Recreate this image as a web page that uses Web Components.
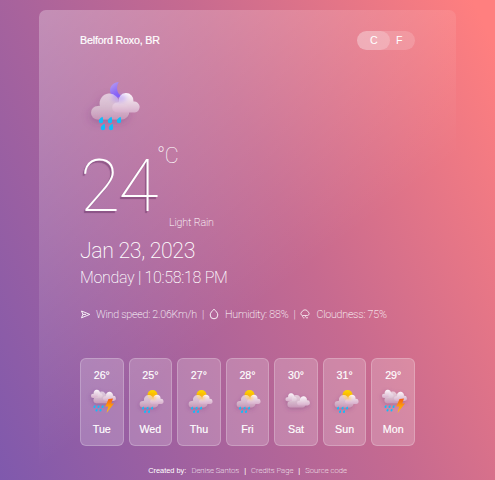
<!DOCTYPE html>
<html lang="en">
<head>
<meta charset="utf-8">
<title>Weather</title>
<style>
html,body{margin:0;height:100%;overflow:hidden}
body{font-family:"Liberation Sans",Arial,sans-serif;color:#fff}
</style>
</head>
<body>
<weather-app></weather-app>
<script>
const define = (name, html) => customElements.define(name, class extends HTMLElement {
  connectedCallback() {
    if (this.shadowRoot) return;
    const t = document.createElement('template');
    t.innerHTML = typeof html === 'function' ? html(this) : html;
    this.attachShadow({mode: 'open'}).append(t.content.cloneNode(true));
  }
});

/* Clouds are drawn on a 38x25 grid, then placed and scaled. */
const BACK = 'M6.700 25A6.700 6.700 0 0 1 6.700 11.600L9 11.300A9.700 9.700 0 1 1 28 9.800A7.800 7.800 0 1 1 30.500 25Z';
const FRONT = 'M4.900 19A5 5 0 0 1 4.900 9L6.500 8.800A7.500 7.500 0 1 1 21.200 8A5.500 5.500 0 0 1 22.500 19Z';
const cloud = (d, x, y, s, fill) =>
  `<path d="${d}" transform="translate(${x} ${y}) scale(${s})" fill="url(#${fill})"/>`;
const drops = (pts, s = 1) => pts.map(([x, y]) =>
  `<path transform="translate(${x} ${y}) scale(${s})" d="M1.500-3.100C-1-1.800-2.100-.3-2.100 1.100A2.050 2.050 0 0 0 2 1.100C2.100-.3 1.900-1.800 1.500-3.100Z" fill="#12bdf8"/>`).join('');
const pair = () =>
  `<g filter="url(#sh)">${cloud(BACK, 5, 16.500, 1, 'b')}</g>${cloud(FRONT, 26.300, 15.500, 1, 'f')}`;
const art = {
  night: () => `<path d="M32.800 4C30 8.500 30.500 16 36 18.500C31 21.500 24 18 24 12.500C24 7.500 28 4.500 32.800 4Z" fill="url(#m)"/>${pair()}
    <ellipse cx="33" cy="20" rx="7.500" ry="4" fill="#9275ff" opacity=".38" filter="url(#bl)"/>${drops([[15,42],[24,42],[33,42],[17,49],[25,49]], 1.05)}`,
  day: () => `<g transform="translate(4 0)"><circle cx="31" cy="14" r="10" fill="url(#s)"/>
    <g transform="translate(.5 -1) scale(.98 .96)">${pair()}</g>
    <ellipse cx="33" cy="20" rx="6" ry="4.500" fill="#ffc86c" opacity=".55" filter="url(#bl)"/>
    ${drops([[12,40],[21,40],[30,40],[16,47],[24,47]])}</g>`,
  clouds: () => `<g filter="url(#sh)">${cloud(FRONT, 9, 11, .82, 'f')}${cloud(BACK, 13, 15, .96, 'b')}${cloud(FRONT, 32, 17, .94, 'f')}</g>`,
  storm: () => `<g filter="url(#sh)">${cloud(FRONT, 8, 4, .85, 'f')}${cloud(BACK, 13, 8, .9, 'b')}${cloud(FRONT, 32, 8, .94, 'f')}</g>
    <path d="M43 22L52 21L48.500 31L54 31L39 50L42.500 37L36.500 37Z" fill="url(#t)"/>
    ${drops([[15,37],[23,37],[31,37],[19,44],[27,44]])}`
};
define('weather-icon', el => `<style>:host{display:block}svg{display:block;width:100%;height:100%;overflow:visible}</style>
<svg viewBox="0 0 60 60"><defs>
<linearGradient id="b" x1="0" y1="0" x2="0" y2="1"><stop stop-color="#f6edf4" stop-opacity=".66"/><stop offset=".55" stop-color="#dbc2d3" stop-opacity=".85"/><stop offset="1" stop-color="#c897b9" stop-opacity=".95"/></linearGradient>
<linearGradient id="f" x1="0" y1="0" x2="0" y2="1"><stop stop-color="#fffaff" stop-opacity=".97"/><stop offset=".5" stop-color="#ead6e4" stop-opacity=".95"/><stop offset="1" stop-color="#d7aecb"/></linearGradient>
<linearGradient id="m" x1="0" y1="0" x2=".6" y2="1"><stop stop-color="#bba2ef"/><stop offset="1" stop-color="#7a55fb"/></linearGradient>
<linearGradient id="s" x1="0" y1="0" x2="0" y2="1"><stop stop-color="#ffd800"/><stop offset="1" stop-color="#f9a000"/></linearGradient>
<linearGradient id="t" x1="0" y1="0" x2="0" y2="1"><stop stop-color="#f45d12"/><stop offset=".5" stop-color="#ff9a0c"/><stop offset="1" stop-color="#ffc21c"/></linearGradient>
<filter id="sh" x="-40%" y="-40%" width="180%" height="200%"><feDropShadow dx="-1" dy="3" stdDeviation="4" flood-color="#6a3474" flood-opacity=".36"/></filter>
<filter id="bl" x="-50%" y="-50%" width="200%" height="200%"><feGaussianBlur stdDeviation="2"/></filter>
</defs>${art[el.getAttribute('kind')]()}</svg>`);

const line = {
  wind: '<path d="M1.500 2L9.800 5.400L1.500 8.800L2.900 5.400ZM2.900 5.400H6"/>',
  drop: '<path d="M5 .2C3.300 2 1.200 3.700 1.200 6A3.800 3.800 0 0 0 8.800 6C8.800 3.700 6.700 2 5 .2Z"/>',
  cloud: '<path stroke-width=".85" d="M2.300 6.500A1.900 1.900 0 0 1 2 2.900A3.200 3.200 0 0 1 8 2.900A1.900 1.900 0 0 1 7.700 6.500ZM3 8.800H4.500M6 8.800H8M2 7.700H3M5 7.700H6"/>'
};
define('weather-stat', el => `<style>
:host{display:flex;align-items:center;height:16px;white-space:nowrap}
svg{width:10px;height:10px;margin-right:6px;overflow:visible;fill:none;stroke:#fff;stroke-width:1;stroke-linejoin:round;opacity:.9}
</style><svg viewBox="0 0 10 10">${line[el.getAttribute('icon')]}</svg><slot></slot>`);

define('unit-switch', `<style>
:host{display:flex;width:58px;height:19.500px;border-radius:10px;background:rgba(255,255,255,.16);font-size:10.700px;line-height:19.500px}
b,i{font-style:normal;font-weight:400;box-sizing:border-box}
b{width:33px;border-radius:10px;background:rgba(255,255,255,.22);padding-left:13px}
i{padding-left:6px}
</style><b>C</b><i>F</i>`);

define('day-card', el => `<style>
:host{display:flex;flex-direction:column;align-items:center;box-sizing:border-box;height:88px;border:1px solid rgba(255,255,255,.22);border-radius:6px;background:rgba(255,255,255,.2);font-size:10.700px;line-height:14px;padding-top:9px;-webkit-text-stroke:.15px #fff}
weather-icon{width:30px;height:30px;margin:6px 0 4px}
</style><span>${el.getAttribute('temp')}°</span><weather-icon kind="${el.getAttribute('kind')}"></weather-icon><slot></slot>`);

define('page-footer', `<style>
:host{display:flex;justify-content:center;white-space:pre;font-size:7.400px;line-height:10px}
span{font-family:Roboto,sans-serif;font-weight:200;font-size:7.700px;margin:0 5px}
span:last-child{margin-right:0}
</style>Created by:<span>Denise Santos</span>|<span>Credits Page</span>|<span>Source code</span>`);

define('weather-app', `<style>
:host{display:block;height:480px;padding:10px 39px 0;box-sizing:border-box;overflow:hidden;background:linear-gradient(65deg,#7f59ad 0%,#c66a90 57%,#ff7f7f 97%)}
main{height:480px;box-sizing:border-box;padding:20.500px 41px 0;border-radius:7px;background:linear-gradient(143deg,rgba(255,255,255,.28),rgba(255,255,255,0) 58%);font-family:Roboto,sans-serif;font-weight:200}
header{display:flex;justify-content:space-between;align-items:center;height:19.500px;font-family:"Liberation Sans",Arial,sans-serif;font-weight:400;font-size:10.700px}
header span{letter-spacing:-.17px;-webkit-text-stroke:.2px #fff}
.now{width:60px;height:60px;margin:28px 0 0 6px}
.temp{display:flex;height:91px;margin-top:8px}
.big{font-size:73px;line-height:80px;font-weight:100;text-shadow:-1.500px 1.500px 1px rgba(80,30,80,.4);width:77px;flex:none;letter-spacing:-1.500px}
.side{display:flex;flex-direction:column}
.unit{font-size:21.500px;line-height:24px;height:72px;margin-top:-2px;font-weight:100;letter-spacing:-.5px}
.desc{font-size:10.700px;line-height:14px;padding-left:12px;white-space:nowrap;letter-spacing:-.15px}
.date{font-size:21.300px;line-height:26px;letter-spacing:-.35px;margin-top:1px}
.time{font-size:16px;line-height:20px;margin-top:4px;letter-spacing:-.3px}
.stats{display:flex;align-items:center;font-size:10.700px;margin-top:18px;gap:5px;letter-spacing:-.21px}
.days{display:grid;grid-template-columns:repeat(7,1fr);gap:5px;margin-top:36px;font-family:"Liberation Sans",Arial,sans-serif;font-weight:400}
page-footer{margin-top:20px;font-family:"Liberation Sans",Arial,sans-serif;font-weight:400}
</style>
<main>
<header><span>Belford Roxo, BR</span><unit-switch></unit-switch></header>
<weather-icon class="now" kind="night"></weather-icon>
<div class="temp"><div class="big">24</div><div class="side"><div class="unit">°C</div><div class="desc">Light Rain</div></div></div>
<div class="date">Jan 23, 2023</div>
<div class="time">Monday | 10:58:18 PM</div>
<div class="stats"><weather-stat icon="wind">Wind speed: 2.06Km/h</weather-stat><span>|</span><weather-stat icon="drop">Humidity: 88%</weather-stat><span>|</span><weather-stat icon="cloud">Cloudness: 75%</weather-stat></div>
<div class="days">
<day-card temp="26" kind="storm">Tue</day-card><day-card temp="25" kind="day">Wed</day-card><day-card temp="27" kind="day">Thu</day-card><day-card temp="28" kind="day">Fri</day-card><day-card temp="30" kind="clouds">Sat</day-card><day-card temp="31" kind="day">Sun</day-card><day-card temp="29" kind="storm">Mon</day-card>
</div>
<page-footer></page-footer>
</main>`);
</script>
</body>
</html>
